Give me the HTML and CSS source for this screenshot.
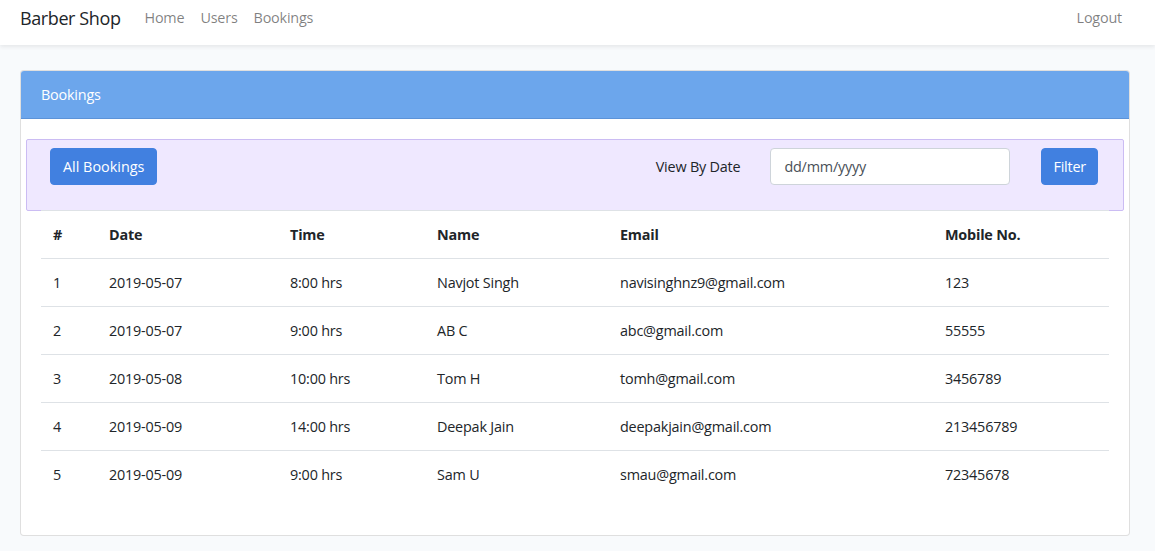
FILE: index.html
```html
<!DOCTYPE html>
<html lang="en">
<head>
<meta charset="utf-8">
<title>Barber Shop</title>
<link rel="stylesheet" href="styles.css">
</head>
<body>
<nav class="navbar">
  <div class="container nav-inner">
    <a class="brand" href="#">Barber Shop</a>
    <ul class="nav-links">
      <li><a href="#">Home</a></li>
      <li><a href="#">Users</a></li>
      <li><a href="#">Bookings</a></li>
    </ul>
    <ul class="nav-links nav-right">
      <li><a href="#">Logout</a></li>
    </ul>
  </div>
</nav>
<main class="main">
  <div class="container">
    <div class="card">
      <div class="card-header">Bookings</div>
      <div class="card-body">
        <form class="filter">
          <button type="button" class="btn btn-all">All Bookings</button>
          <div class="filter-right">
            <label class="filter-label">View By Date</label>
            <input class="date-input" type="text" placeholder="dd/mm/yyyy">
            <button type="button" class="btn btn-filter">Filter</button>
          </div>
        </form>
        <table class="table">
          <thead>
            <tr>
              <th class="c1">#</th>
              <th class="c2">Date</th>
              <th class="c3">Time</th>
              <th class="c4">Name</th>
              <th class="c5">Email</th>
              <th class="c6">Mobile No.</th>
            </tr>
          </thead>
          <tbody>
            <tr><td>1</td><td>2019-05-07</td><td>8:00 hrs</td><td>Navjot Singh</td><td>navisinghnz9@gmail.com</td><td>123</td></tr>
            <tr><td>2</td><td>2019-05-07</td><td>9:00 hrs</td><td>AB C</td><td>abc@gmail.com</td><td>55555</td></tr>
            <tr><td>3</td><td>2019-05-08</td><td>10:00 hrs</td><td>Tom H</td><td>tomh@gmail.com</td><td>3456789</td></tr>
            <tr><td>4</td><td>2019-05-09</td><td>14:00 hrs</td><td>Deepak Jain</td><td>deepakjain@gmail.com</td><td>213456789</td></tr>
            <tr><td>5</td><td>2019-05-09</td><td>9:00 hrs</td><td>Sam U</td><td>smau@gmail.com</td><td>72345678</td></tr>
          </tbody>
        </table>
      </div>
    </div>
  </div>
</main>
</body>
</html>
```
FILE: styles.css
```css
* { box-sizing: border-box; }
html, body { margin: 0; padding: 0; }
body {
  background: #f8fafc;
  font-family: "Open Sans", "Noto Sans", sans-serif;
  font-size: 14.4px;
  line-height: 1.6;
  letter-spacing: -0.2px;
  color: #212529;
}
a { text-decoration: none; }
.container {
  width: 1110px;
  margin: 0 20px;
}
.navbar {
  background: #fff;
  box-shadow: 0 2px 4px rgba(0, 0, 0, 0.075);
  height: 45px;
}
.nav-inner {
  display: flex;
  align-items: center;
  height: 36px;
}
.brand {
  font-size: 18px;
  letter-spacing: -0.4px;
  color: #212529;
  margin-right: 16px;
  line-height: 1;
}
.nav-links {
  list-style: none;
  display: flex;
  margin: 0;
  padding: 0;
}
.nav-links a {
  display: block;
  padding: 0 8px;
  color: rgba(0, 0, 0, 0.5);
}
.nav-right { margin-left: auto; }
.main { padding-top: 25px; }
.card {
  background: #fff;
  border: 1px solid rgba(0, 0, 0, 0.125);
  border-radius: 4px;
  overflow: hidden;
}
.card-header {
  background: #6ca6ec;
  color: #fff;
  padding: 12px 20px;
  height: 48px;
  line-height: 23px;
  border-bottom: 1px solid #5c93d8;
}
.card-body { padding: 20px 20px 20px; }
.filter {
  margin: 0 -15px;
  background: #efe8ff;
  border: 1px solid #cbbcf3;
  border-radius: 2px;
  padding: 8px 25px 25px 23px;
  display: flex;
  align-items: center;
  justify-content: space-between;
}
.btn {
  font-family: inherit;
  font-size: 14.4px;
  line-height: 23px;
  background: #4180e0;
  color: #fff;
  border: 1px solid #4180e0;
  border-radius: 4px;
  padding: 6px 12px;
  height: 37px;
}
.btn-all { letter-spacing: 0; padding: 6px 12px; }
.btn-filter { letter-spacing: -0.2px; margin-left: 31px; padding: 6px 11px; }
.filter-right {
  display: flex;
  align-items: center;
}
.filter-label {
  color: #212529;
  margin-right: 30px;
}
.date-input {
  width: 240px;
  height: 37px;
  font-family: inherit;
  font-size: 14.4px;
  letter-spacing: -0.2px;
  color: #495057;
  border: 1px solid #ced4da;
  border-radius: 4px;
  padding: 6px 13px;
  background: #fff;
}
.date-input::placeholder { color: #495057; }
.table {
  width: 100%;
  border-collapse: collapse;
  margin-bottom: 17px;
  margin-top: -1px;
}
.table th, .table td {
  text-align: left;
  padding: 12px;
  border-top: 1px solid #dee2e6;
  vertical-align: top;
}
.table th { font-weight: 700; }
.c1 { width: 56px; }
.c2 { width: 181px; }
.c3 { width: 147px; }
.c4 { width: 183px; }
.c5 { width: 325px; }
.c6 { width: auto; }
```
